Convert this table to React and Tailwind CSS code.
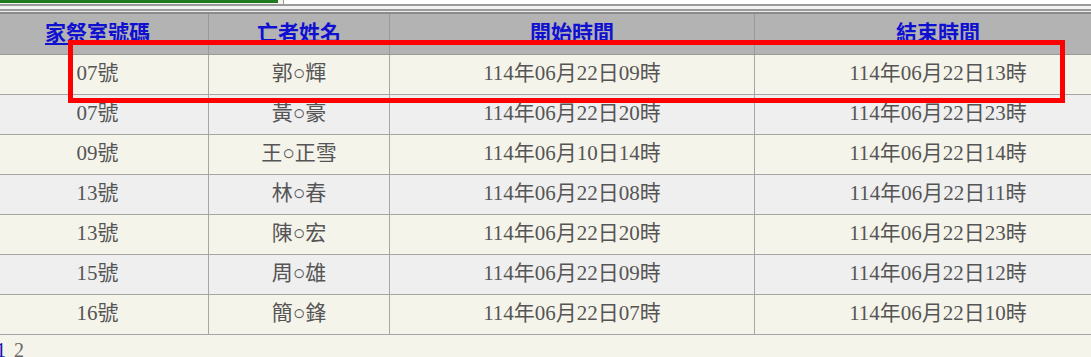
const rows = [
  ['07號', '郭○輝', '114年06月22日09時', '114年06月22日13時'],
  ['07號', '黃○豪', '114年06月22日20時', '114年06月22日23時'],
  ['09號', '王○正雪', '114年06月10日14時', '114年06月22日14時'],
  ['13號', '林○春', '114年06月22日08時', '114年06月22日11時'],
  ['13號', '陳○宏', '114年06月22日20時', '114年06月22日23時'],
  ['15號', '周○雄', '114年06月22日09時', '114年06月22日12時'],
  ['16號', '簡○鋒', '114年06月22日07時', '114年06月22日10時'],
]

const headers = ['家祭室號碼', '亡者姓名', '開始時間', '結束時間']

export default function App() {
  return (
    <div
      className="relative w-[1091px] h-[357px] overflow-hidden bg-[#f5f4ea]"
      style={{ fontFamily: '"Liberation Serif", "Noto Sans CJK TC", serif' }}
    >
      {/* top bar remnants */}
      <div className="flex h-[4px]">
        <div className="w-[278px] h-[3px] bg-[#1f7a1f]" />
        <div className="ml-[5px] flex-1 border-l border-[#999] bg-white" />
      </div>
      <div className="h-[2px] bg-[#9a9a9a]" />
      <div className="h-[3px] bg-[#f2f2f2]" />
      <div className="h-[2px] bg-[#9a9a9a]" />
      <div className="h-[1px] bg-[#eeeeee]" />
      <div className="h-[2px] bg-[#8a8a8a]" />

      <table className="-ml-[14px] border-collapse table-fixed w-[1135px]">
        <colgroup>
          <col className="w-[222px]" />
          <col className="w-[181px]" />
          <col className="w-[365px]" />
          <col className="w-[367px]" />
        </colgroup>
        <thead>
          <tr className="bg-[#b3b3b3]">
            {headers.map((h) => (
              <th
                key={h}
                className="h-[40px] border-x border-b border-[#999] p-0 text-center align-middle"
              >
                <a className="text-[21px] font-bold text-[#1010d0] underline underline-offset-[3px] decoration-2">
                  {h}
                </a>
              </th>
            ))}
          </tr>
        </thead>
        <tbody>
          {rows.map((r, i) => (
            <tr key={i} className={i % 2 === 0 ? 'bg-[#f5f4ea]' : 'bg-[#efefef]'}>
              {r.map((c, j) => (
                <td
                  key={j}
                  className="h-[40px] border border-[#a6a6a6] p-0 text-center align-middle text-[21px] text-[#555]"
                >
                  {c}
                </td>
              ))}
            </tr>
          ))}
        </tbody>
      </table>

      <div className="-ml-[4px] mt-[5px] text-[20px] leading-none">
        <a className="text-[#1010b0]">1</a>
        <span className="ml-[8px] text-[#666]">2</span>
      </div>

      {/* annotation box */}
      <div className="absolute left-[68px] top-[40px] w-[997px] h-[63px] border-[5px] border-[#ff0000]" />
    </div>
  )
}
